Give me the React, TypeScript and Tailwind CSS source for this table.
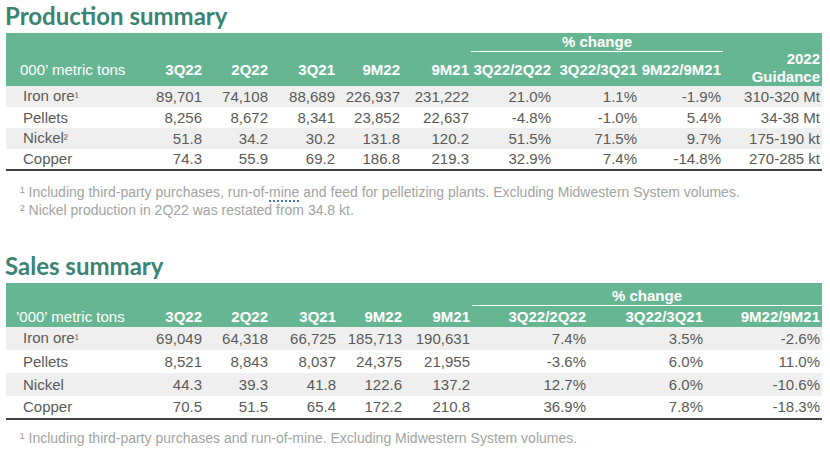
const cell = "font-['Liberation_Sans',Arial,sans-serif]"

type Row = { label: string; sup?: string; values: string[] }

const production: Row[] = [
  { label: "Iron ore", sup: "¹", values: ["89,701", "74,108", "88,689", "226,937", "231,222", "21.0%", "1.1%", "-1.9%", "310-320 Mt"] },
  { label: "Pellets", values: ["8,256", "8,672", "8,341", "23,852", "22,637", "-4.8%", "-1.0%", "5.4%", "34-38 Mt"] },
  { label: "Nickel", sup: "²", values: ["51.8", "34.2", "30.2", "131.8", "120.2", "51.5%", "71.5%", "9.7%", "175-190 kt"] },
  { label: "Copper", values: ["74.3", "55.9", "69.2", "186.8", "219.3", "32.9%", "7.4%", "-14.8%", "270-285 kt"] },
]

const sales: Row[] = [
  { label: "Iron ore", sup: "¹", values: ["69,049", "64,318", "66,725", "185,713", "190,631", "7.4%", "3.5%", "-2.6%"] },
  { label: "Pellets", values: ["8,521", "8,843", "8,037", "24,375", "21,955", "-3.6%", "6.0%", "11.0%"] },
  { label: "Nickel", values: ["44.3", "39.3", "41.8", "122.6", "137.2", "12.7%", "6.0%", "-10.6%"] },
  { label: "Copper", values: ["70.5", "51.5", "65.4", "172.2", "210.8", "36.9%", "7.8%", "-18.3%"] },
]

const prodWidths = [134, 64, 66, 67, 65, 69, 82, 86, 84, 99]
const salesWidths = [134, 64, 66, 68, 66, 68, 116, 117, 117]
const heads = ["3Q22", "2Q22", "3Q21", "9M22", "9M21", "3Q22/2Q22", "3Q22/3Q21", "9M22/9M21"]

function Title({ children }: { children: string }) {
  return (
    <h2 className="h-[33px] pl-[5px] pt-[2px] font-['Lato',sans-serif] text-[24px] font-bold leading-[28px] text-[#3b8373]">
      {children}
    </h2>
  )
}

function BodyRows({ rows, height }: { rows: Row[]; height: string }) {
  return (
    <tbody>
      {rows.map((r, i) => (
        <tr key={r.label} className={`${height} ${i % 2 === 0 ? "bg-[#efefef]" : "bg-white"} ${i === rows.length - 1 ? "border-b-2 border-[#3f3f3f]" : ""}`}>
          <td className="pl-[17px] text-left">
            {r.label}
            {r.sup && <span className="text-[12px]">{r.sup}</span>}
          </td>
          {r.values.map((v, j) => (
            <td key={j} className="pr-[2px] text-right whitespace-nowrap">{v}</td>
          ))}
        </tr>
      ))}
    </tbody>
  )
}

function Footnote({ children }: { children: React.ReactNode }) {
  return (
    <p className="pl-[20px] font-['Liberation_Sans',Arial,sans-serif] text-[14px] leading-[18px] text-[#a3a3a3]">
      {children}
    </p>
  )
}

export default function App() {
  return (
    <div className="h-[460px] w-[830px] overflow-hidden bg-white">
      <Title>Production summary</Title>
      <table className={`ml-[6px] w-[816px] table-fixed border-collapse text-[15px] leading-[17px] text-[#5a5a5a] ${cell}`}>
        <colgroup>
          {prodWidths.map((w, i) => (
            <col key={i} style={{ width: w }} />
          ))}
        </colgroup>
        <thead className="bg-[#67b693] text-white">
          <tr className="h-[18px]">
            <th colSpan={6}></th>
            <th colSpan={3} className="border-b-[1.5px] border-white pb-[1px] text-center font-bold">% change</th>
            <th rowSpan={2} className="pr-[2px] pb-0 text-right align-bottom font-bold leading-[18px]">
              2022
              <br />
              Guidance
            </th>
          </tr>
          <tr className="h-[34px]">
            <th className="pl-[14px] pb-[8px] text-left align-bottom font-normal whitespace-nowrap">000’ metric tons</th>
            {heads.map((h) => (
              <th key={h} className="pr-[2px] pb-[8px] text-right align-bottom font-bold whitespace-nowrap">{h}</th>
            ))}
          </tr>
        </thead>
        <BodyRows rows={production} height="h-[21px]" />
      </table>
      <div className="pt-[12px]">
        <Footnote>
          ¹ Including third-party purchases, run-of-
          <span className="border-b-2 border-dotted border-[#4a6fd6]">mine</span> and feed for pelletizing plants. Excluding Midwestern System volumes.
        </Footnote>
        <Footnote>² Nickel production in 2Q22 was restated from 34.8 kt.</Footnote>
      </div>

      <div className="mt-[31px]">
        <Title>Sales summary</Title>
      </div>
      <table className={`ml-[6px] w-[816px] table-fixed border-collapse text-[15px] leading-[17px] text-[#5a5a5a] ${cell}`}>
        <colgroup>
          {salesWidths.map((w, i) => (
            <col key={i} style={{ width: w }} />
          ))}
        </colgroup>
        <thead className="bg-[#67b693] text-white">
          <tr className="h-[23px]">
            <th colSpan={6}></th>
            <th colSpan={3} className="border-b-[1.5px] border-white pt-[3px] text-center font-bold">% change</th>
          </tr>
          <tr className="h-[21px]">
            <th className="pl-[10px] pb-[2px] text-left align-bottom font-normal whitespace-nowrap">’000’ metric tons</th>
            {heads.map((h) => (
              <th key={h} className="pr-[2px] pb-[2px] text-right align-bottom font-bold whitespace-nowrap">{h}</th>
            ))}
          </tr>
        </thead>
        <BodyRows rows={sales} height="h-[23px]" />
      </table>
      <div className="pt-[9px]">
        <Footnote>¹ Including third-party purchases and run-of-mine. Excluding Midwestern System volumes.</Footnote>
      </div>
    </div>
  )
}
